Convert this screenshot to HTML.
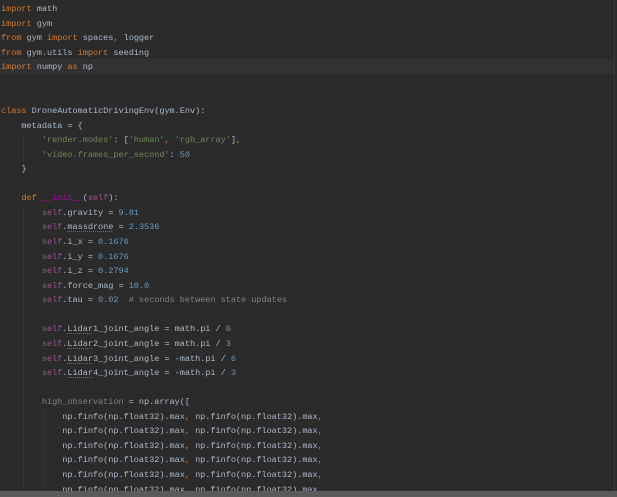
<!DOCTYPE html>
<html><head><meta charset="utf-8"><style>
html,body{margin:0;padding:0;}
body{width:617px;height:497px;background:#2b2b2b;overflow:hidden;position:relative;}
pre{margin:0;position:absolute;left:1px;top:2px;font-family:"Liberation Mono",monospace;font-size:8.6px;line-height:14.57px;color:#a9b7c6;letter-spacing:-0.05px}
.k{color:#cc7832}.s{color:#94558d}.n{color:#6897bb}.t{color:#6a8759}.c{color:#808080}.d{color:#b200b2}
.u{text-decoration:underline dotted #5f7a4f;text-decoration-thickness:1px;text-underline-offset:2px}
.hl{position:absolute;left:0;top:59px;width:614px;height:15px;background:#323232}
.bot{position:absolute;left:0;top:491px;width:617px;height:6px;background:#5a5a5a}
.r{position:absolute;left:614px;top:0;width:1px;height:491px;background:#3a3a3a}
.g{position:absolute;width:1px;background:#333333}
</style></head><body>
<div class="hl"></div>
<div class="g" style="left:23px;top:132px;height:44px"></div>
<div class="g" style="left:23px;top:205px;height:286px"></div>
<div class="g" style="left:44px;top:408px;height:83px"></div>
<pre><span class="k">import</span> math
<span class="k">import</span> gym
<span class="k">from</span> gym <span class="k">import</span> spaces<span class="k">,</span> logger
<span class="k">from</span> gym.utils <span class="k">import</span> seeding
<span class="k">import</span> numpy <span class="k">as</span> np


<span class="k">class</span> DroneAutomaticDrivingEnv(gym.Env):
    metadata = {
        <span class="t">'render.modes'</span>: [<span class="t">'human'</span><span class="k">,</span> <span class="t">'rgb_array'</span>]<span class="k">,</span>
        <span class="t">'video.frames_per_second'</span>: <span class="n">50</span>
    }

    <span class="k">def</span> <span class="d">__init__</span>(<span class="s">self</span>):
        <span class="s">self</span>.gravity = <span class="n">9.81</span>
        <span class="s">self</span>.<span class="u">massdrone</span> = <span class="n">2.3536</span>
        <span class="s">self</span>.i_x = <span class="n">0.1676</span>
        <span class="s">self</span>.i_y = <span class="n">0.1676</span>
        <span class="s">self</span>.i_z = <span class="n">0.2794</span>
        <span class="s">self</span>.force_mag = <span class="n">10.0</span>
        <span class="s">self</span>.tau = <span class="n">0.02</span>  <span class="c"># seconds between state updates</span>

        <span class="s">self</span>.<span class="u">Lidar</span>1_joint_angle = math.pi / <span class="n">6</span>
        <span class="s">self</span>.<span class="u">Lidar</span>2_joint_angle = math.pi / <span class="n">3</span>
        <span class="s">self</span>.<span class="u">Lidar</span>3_joint_angle = -math.pi / <span class="n">6</span>
        <span class="s">self</span>.<span class="u">Lidar</span>4_joint_angle = -math.pi / <span class="n">3</span>

        <span class="c">high_observation</span> = np.array([
            np.finfo(np.float32).max<span class="k">,</span> np.finfo(np.float32).max<span class="k">,</span>
            np.finfo(np.float32).max<span class="k">,</span> np.finfo(np.float32).max<span class="k">,</span>
            np.finfo(np.float32).max<span class="k">,</span> np.finfo(np.float32).max<span class="k">,</span>
            np.finfo(np.float32).max<span class="k">,</span> np.finfo(np.float32).max<span class="k">,</span>
            np.finfo(np.float32).max<span class="k">,</span> np.finfo(np.float32).max<span class="k">,</span>
            np.finfo(np.float32).max<span class="k">,</span> np.finfo(np.float32).max<span class="k">,</span>
</pre>
<div class="r"></div>
<div class="bot"></div>
</body></html>
